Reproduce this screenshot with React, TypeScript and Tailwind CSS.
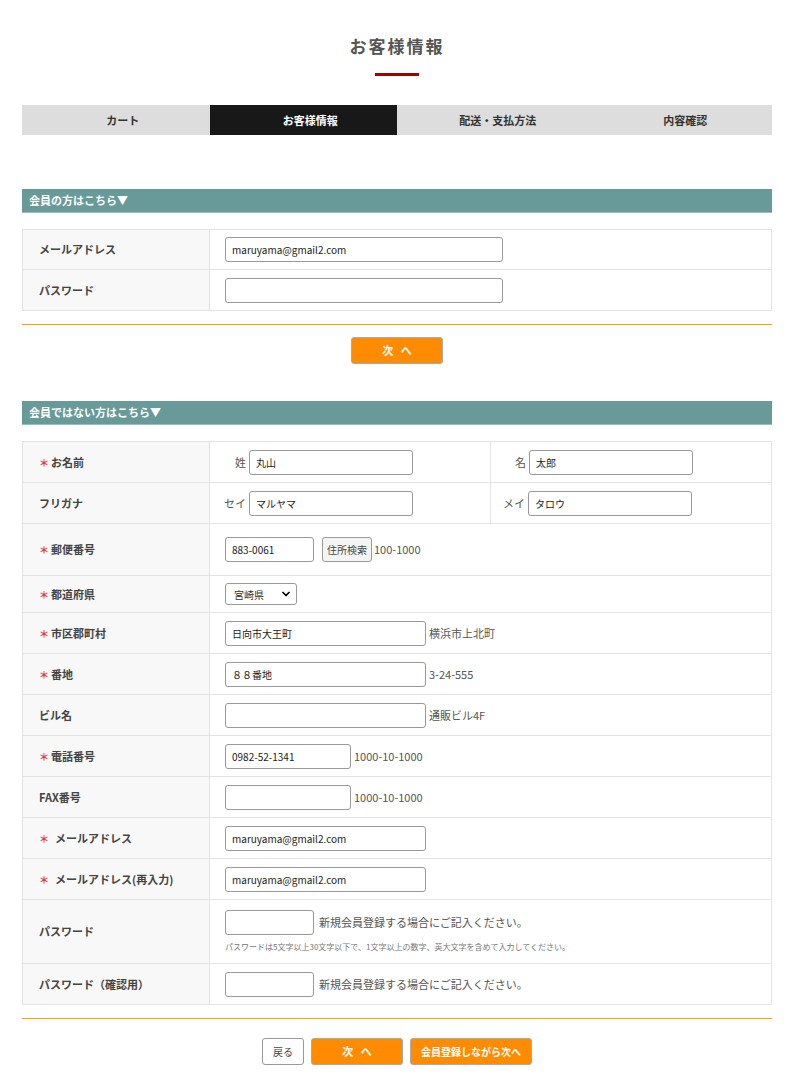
import { ChevronDown } from 'lucide-react'

const font = { fontFamily: '"Noto Sans CJK JP", "Noto Sans", sans-serif' }

const STEPS = ['カート', 'お客様情報', '配送・支払方法', '内容確認']

function Req({ wide }: { wide?: boolean }) {
  return <span className={`text-[#e53935] text-[10px] ${wide ? 'mr-[6px]' : 'mr-[2px]'}`}>＊</span>
}

function TextInput({ value = '', w = 'w-[278px]' }: { value?: string; w?: string }) {
  return (
    <input
      readOnly
      value={value}
      className={`${w} h-[25px] border border-[#999] rounded-[3px] px-[6px] text-[10px] text-[#222] bg-white outline-none`}
    />
  )
}

function Row({
  label,
  req,
  wide,
  h,
  children,
}: {
  label: string
  req?: boolean
  wide?: boolean
  h: string
  children: React.ReactNode
}) {
  return (
    <div className={`flex ${h}`}>
      <div className="w-[187px] shrink-0 bg-[#f8f8f8] border-r border-[#e4e4e4] flex items-center pl-[16px] text-[11px] font-bold text-[#444]">
        {req && <Req wide={wide} />}
        {label}
      </div>
      <div className="flex-1 flex items-center pl-[15px] text-[11px] text-[#555]">{children}</div>
    </div>
  )
}

function Header({ children }: { children: React.ReactNode }) {
  return (
    <div className="h-[24px] bg-[#679a99] border-b border-[#9bbdbc] flex items-center pl-[7px] text-[11px] font-bold text-white">
      {children}
    </div>
  )
}

function OrangeLine() {
  return <div className="mt-[13px] h-px bg-[#f7a000]" />
}

const ADDRESS_ROWS = [
  { label: '市区郡町村', req: true, v: '日向市大王町', note: '横浜市上北町', w: 'w-[201px]' },
  { label: '番地', req: true, v: '８８番地', note: '3-24-555', w: 'w-[201px]' },
  { label: 'ビル名', req: false, v: '', note: '通販ビル4F', w: 'w-[201px]' },
  { label: '電話番号', req: true, v: '0982-52-1341', note: '1000-10-1000', w: 'w-[126px]' },
  { label: 'FAX番号', req: false, v: '', note: '1000-10-1000', w: 'w-[126px]' },
  { label: 'メールアドレス', req: true, wide: true, v: 'maruyama@gmail2.com', note: '', w: 'w-[201px]' },
  { label: 'メールアドレス(再入力)', req: true, wide: true, v: 'maruyama@gmail2.com', note: '', w: 'w-[201px]' },
]

export default function App() {
  return (
    <div style={font} className="w-[797px] bg-white pb-[20px]">
      <div className="w-[750px] ml-[22px]">
        {/* Title */}
        <div className="pt-[34px] flex flex-col items-center">
          <h1 className="text-[17px] font-bold text-[#555] tracking-[2px] leading-[24px]">お客様情報</h1>
          <div className="w-[44px] h-[3px] bg-[#a30000] mt-[15px]" />
        </div>

        {/* Steps */}
        <div className="mt-[29px] grid grid-cols-4 h-[30px]">
          {STEPS.map((s, i) => (
            <div
              key={s}
              className={`flex items-center justify-center pl-[14px] text-[11px] font-bold ${
                i === 1 ? 'bg-[#181818] text-white' : 'bg-[#dddddd] text-[#333]'
              }`}
            >
              {s}
            </div>
          ))}
        </div>

        {/* Member */}
        <div className="mt-[54px]">
          <Header>会員の方はこちら▼</Header>
        </div>
        <div className="mt-[16px] border border-[#e4e4e4] divide-y divide-[#e4e4e4]">
          <Row label="メールアドレス" h="h-[40px]">
            <TextInput value="maruyama@gmail2.com" />
          </Row>
          <Row label="パスワード" h="h-[40px]">
            <TextInput />
          </Row>
        </div>
        <OrangeLine />
        <div className="mt-[12px] flex justify-center">
          <button className="w-[92px] h-[27px] bg-[#ff8c00] border border-[#aaa] rounded-[3px] text-white text-[11px] font-bold">
            次&nbsp;&nbsp;&nbsp;へ
          </button>
        </div>

        {/* Guest */}
        <div className="mt-[37px]">
          <Header>会員ではない方はこちら▼</Header>
        </div>
        <div className="mt-[16px] border border-[#e4e4e4] divide-y divide-[#e4e4e4]">
          <div className="flex h-[41px]">
            <div className="w-[187px] shrink-0 bg-[#f8f8f8] border-r border-[#e4e4e4] flex items-center pl-[16px] text-[11px] font-bold text-[#444]">
              <Req />
              お名前
            </div>
            <div className="w-[281px] border-r border-[#e4e4e4] flex items-center justify-end pr-[77px] text-[11px] text-[#555]">
              <span className="mr-[3px]">姓</span>
              <TextInput value="丸山" w="w-[164px]" />
            </div>
            <div className="flex-1 flex items-center pl-[24px] text-[11px] text-[#555]">
              <span className="mr-[3px]">名</span>
              <TextInput value="太郎" w="w-[164px]" />
            </div>
          </div>
          <div className="flex h-[41px]">
            <div className="w-[187px] shrink-0 bg-[#f8f8f8] border-r border-[#e4e4e4] flex items-center pl-[16px] text-[11px] font-bold text-[#444]">
              フリガナ
            </div>
            <div className="w-[281px] border-r border-[#e4e4e4] flex items-center justify-end pr-[77px] text-[11px] text-[#555]">
              <span className="mr-[3px]">セイ</span>
              <TextInput value="マルヤマ" w="w-[164px]" />
            </div>
            <div className="flex-1 flex items-center pl-[12px] text-[11px] text-[#555]">
              <span className="mr-[3px]">メイ</span>
              <TextInput value="タロウ" w="w-[164px]" />
            </div>
          </div>
          <Row label="郵便番号" req h="h-[52px]">
            <TextInput value="883-0061" w="w-[89px]" />
            <button className="ml-[8px] h-[25px] px-[4px] border border-[#999] rounded-[3px] bg-[#f4f4f4] text-[10px] text-[#444]">
              住所検索
            </button>
            <span className="ml-[2px]">100-1000</span>
          </Row>
          <Row label="都道府県" req h="h-[37px]">
            <div className="w-[72px] h-[22px] border border-[#999] rounded-[3px] flex items-center justify-between pl-[8px] pr-[4px] text-[10px] text-[#333]">
              宮崎県
              <ChevronDown size={12} strokeWidth={3.5} className="text-black" />
            </div>
          </Row>
          {ADDRESS_ROWS.map((r) => (
            <Row key={r.label} label={r.label} req={r.req} wide={r.wide} h="h-[41px]">
              <TextInput value={r.v} w={r.w} />
              {r.note && <span className="ml-[3px]">{r.note}</span>}
            </Row>
          ))}
          <Row label="パスワード" h="h-[64px]">
            <div className="flex flex-col">
              <div className="flex items-center">
                <TextInput w="w-[89px]" />
                <span className="ml-[5px]">新規会員登録する場合にご記入ください。</span>
              </div>
              <div className="mt-[6px] text-[8px] text-[#777]">
                パスワードは5文字以上30文字以下で、1文字以上の数字、英大文字を含めて入力してください。
              </div>
            </div>
          </Row>
          <Row label="パスワード（確認用）" h="h-[40px]">
            <TextInput w="w-[89px]" />
            <span className="ml-[5px]">新規会員登録する場合にご記入ください。</span>
          </Row>
        </div>
        <OrangeLine />
        <div className="mt-[19px] flex justify-center gap-[7px]">
          <button className="w-[42px] h-[27px] bg-white border border-[#999] rounded-[3px] text-[#444] text-[10px]">
            戻る
          </button>
          <button className="w-[92px] h-[27px] bg-[#ff8c00] border border-[#aaa] rounded-[3px] text-white text-[11px] font-bold">
            次&nbsp;&nbsp;&nbsp;へ
          </button>
          <button className="w-[122px] h-[27px] bg-[#ff8c00] border border-[#aaa] rounded-[3px] text-white text-[10px] font-bold">
            会員登録しながら次へ
          </button>
        </div>
      </div>
    </div>
  )
}
